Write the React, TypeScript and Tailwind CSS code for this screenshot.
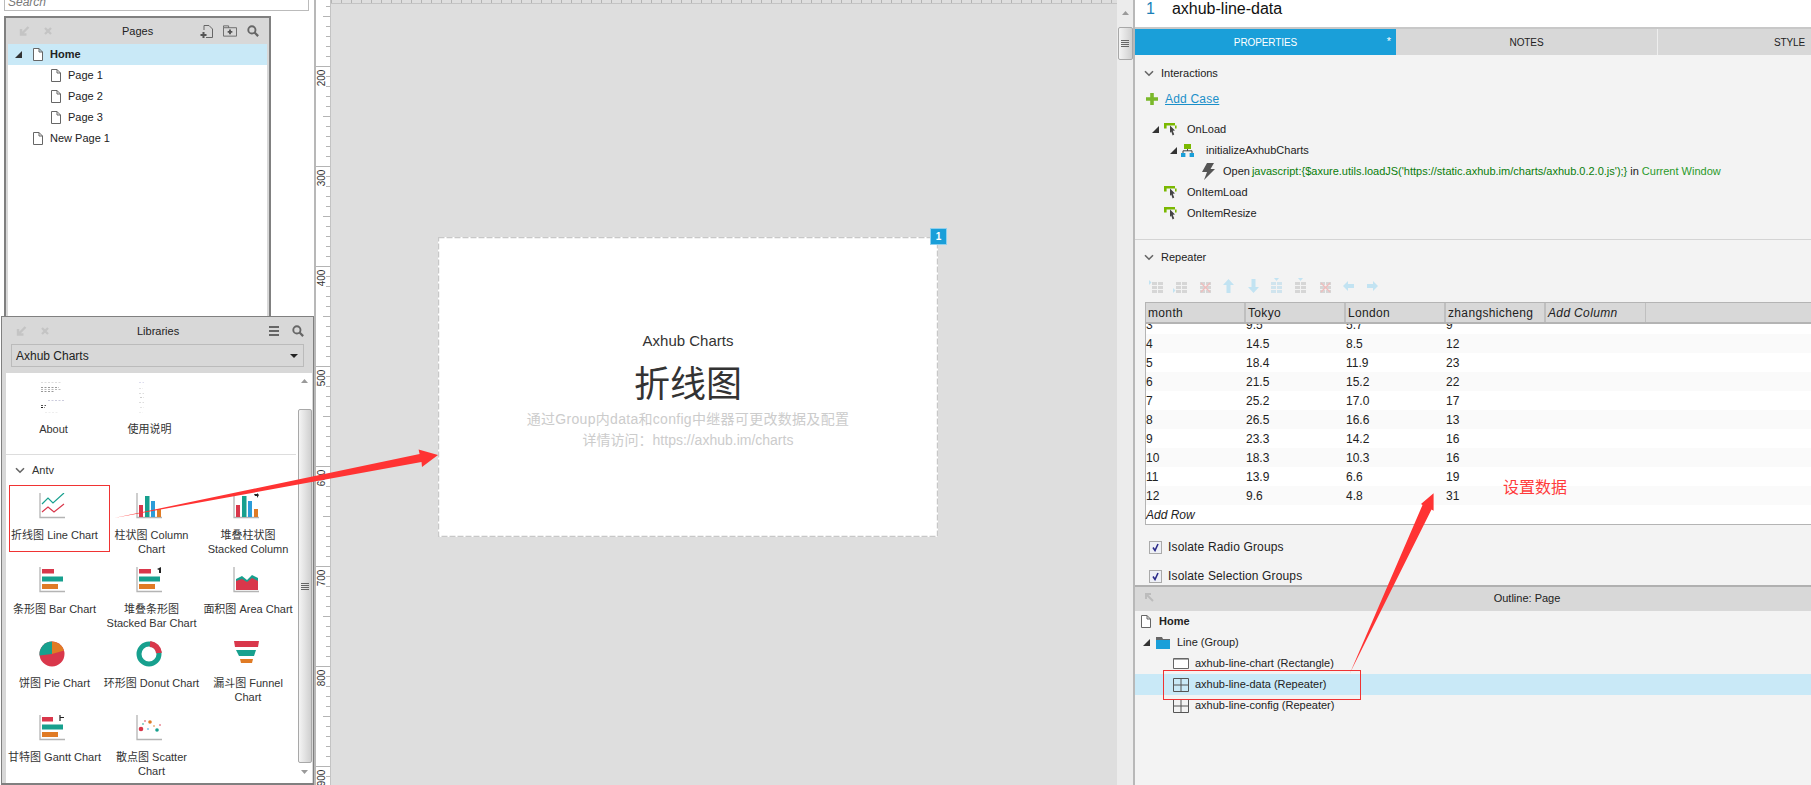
import React from "react";

const PageIcon = ({ className = "" }: { className?: string }) => (
  <svg width="10" height="13" viewBox="0 0 10 13" className={className}>
    <path d="M.5.5H6L9.5 4V12.5H.5Z M6 .5V4H9.5" fill="#fff" stroke="#666" />
  </svg>
);

const Tri = () => (
  <svg width="7" height="7" viewBox="0 0 7 7"><path d="M7 0V7H0Z" fill="#333" /></svg>
);

const Chevron = () => (
  <svg width="10" height="7" viewBox="0 0 10 7"><path d="M1 1.2L5 5.2L9 1.2" fill="none" stroke="#666" strokeWidth="1.6" /></svg>
);

const Cursor = () => (
  <svg width="13" height="13" viewBox="0 0 13 13">
    <path d="M0 0H11V2.6H2.6V5.4H0Z" fill="#7ab800" />
    <path d="M11 2.6H12.6V5.4H11Z" fill="#7ab800" />
    <path d="M6 2.6L11 7.6L8.8 7.8L10.2 11.6L8.6 12.4L7.2 8.6L6 10Z" fill="#444" />
  </svg>
);

const CaseIcon = () => (
  <svg width="13" height="13" viewBox="0 0 13 13">
    <path d="M3 0H10V5H3Z" fill="#7ab800" />
    <path d="M2 9V6.8H11V9M6.5 5V7" fill="none" stroke="#444" />
    <path d="M0 9H4.4V13H0ZM8.6 9H13V13H8.6Z" fill="#1a9fd9" />
  </svg>
);

const Bolt = () => (
  <svg width="13" height="17" viewBox="0 0 13 17"><path d="M5 0H12L8.5 6H13L2 17L5 9H0Z" fill="#555" /></svg>
);

const Axis = () => <path d="M1 0V24.5H26" fill="none" stroke="#b4b4b4" strokeWidth="1.3" />;

const red = "#d9374b";
const teal = "#17a08e";
const orange = "#e07b25";
const blue = "#2b9cd8";

const ChartIcon = ({ kind }: { kind: string }) => {
  return (
    <svg width="28" height="26" viewBox="0 0 28 26">
      {kind === "line" && (
        <>
          <Axis />
          <path d="M3 11L9 5L14 10L25 0" fill="none" stroke={teal} strokeWidth="1.2" />
          <path d="M3 19L9 14L15 19L25 11" fill="none" stroke={red} strokeWidth="1.2" />
        </>
      )}
      {kind === "column" && (
        <>
          <Axis />
          <rect x="3" y="12" width="4" height="12" fill={red} />
          <rect x="9" y="3" width="4.5" height="21" fill={teal} />
          <rect x="15" y="8" width="4" height="16" fill={blue} />
          <rect x="21" y="16" width="4" height="8" fill={orange} />
        </>
      )}
      {kind === "stackcol" && (
        <>
          <Axis />
          <rect x="3" y="12" width="4" height="12" fill={red} />
          <rect x="9" y="3" width="4.5" height="21" fill={teal} />
          <rect x="15" y="8" width="4" height="16" fill={blue} />
          <rect x="21" y="16" width="4" height="8" fill={orange} />
          <path d="M21 1H24V0L26 2L24 5V3H22Z" fill="#222" />
        </>
      )}
      {(kind === "bar" || kind === "stackbar" || kind === "gantt") && (
        <>
          <Axis />
          <rect x="3" y="2" width={kind === "gantt" ? 11 : 12} height="4.5" fill={red} />
          <rect x="3" y="9.5" width="21" height="5" fill={teal} />
          <rect x="3" y="17" width="16" height="5" fill={orange} />
          {kind === "stackbar" && <path d="M21 2L25 0V6H23V3Z" fill="#222" />}
          {kind === "gantt" && <path d="M21 0V6M21 2.5H25" stroke="#222" strokeWidth="1.2" />}
        </>
      )}
      {kind === "area" && (
        <>
          <Axis />
          <path d="M3 12L9 9L14 13L19 8L25 11V23H3Z" fill={teal} />
          <path d="M3 14L9 12L14 15L19 11L25 14V23H3Z" fill={red} />
        </>
      )}
      {kind === "pie" && (
        <>
          <circle cx="13" cy="13" r="12.5" fill={red} />
          <path d="M13 13V.5A12.5 12.5 0 0 1 25 9.5Z" fill={orange} />
          <path d="M13 13V.5A12.5 12.5 0 0 0 .6 14.5Z" fill={teal} />
        </>
      )}
      {kind === "donut" && (
        <>
          <circle cx="13" cy="13" r="10" fill="none" stroke={teal} strokeWidth="5" />
          <path d="M14 3A10 10 0 0 1 23 12" fill="none" stroke={red} strokeWidth="6" />
        </>
      )}
      {kind === "funnel" && (
        <>
          <path d="M1 0H26L25 6H2Z" fill={red} />
          <path d="M3 9H23L21 15H6Z" fill={teal} />
          <path d="M7 18H20L19 22H8Z" fill={orange} />
        </>
      )}
      {kind === "scatter" && (
        <>
          <Axis />
          <circle cx="5" cy="14" r="2.3" fill={red} />
          <circle cx="14" cy="7" r="1.8" fill={orange} />
          <circle cx="21" cy="15" r="1.8" fill={teal} />
          <circle cx="9" cy="6" r="0.8" fill={red} />
          <circle cx="7" cy="9" r="0.8" fill={teal} />
          <circle cx="18" cy="11" r="0.8" fill={orange} />
          <circle cx="24" cy="10" r="0.8" fill={red} />
          <circle cx="12" cy="14" r="0.8" fill={blue} />
        </>
      )}
    </svg>
  );
};

const Thumb = ({ wide }: { wide: boolean }) => (
  <svg width="28" height="32" viewBox="0 0 28 32">
    {(wide
      ? [[1, 1, 20, "#ddd"], [1, 6, 18, "#999"], [1, 8, 20, "#bbb"], [1, 10, 13, "#999"], [8, 19, 16, "#ccd"], [1, 24, 5, "#555"], [1, 26, 4, "#222"], [5, 31, 14, "#eee"]]
      : [[3, 1, 5, "#dde"], [3, 7, 4, "#e4e4e4"], [3, 12, 5, "#ddd"], [4, 16, 4, "#ccc"], [3, 21, 5, "#ddd"], [4, 26, 4, "#e4e4e4"], [3, 31, 4, "#eee"]]
    ).map((r, i) => (
      <line key={i} x1={r[0] as number} y1={(r[1] as number) + 0.5} x2={(r[0] as number) + (r[2] as number)} y2={(r[1] as number) + 0.5} stroke={r[3] as string} strokeDasharray="2 1.5" />
    ))}
  </svg>
);

const Search = () => (
  <svg width="12" height="12" viewBox="0 0 14 14"><circle cx="5.7" cy="5.7" r="4.2" fill="none" stroke="#666" strokeWidth="2.2" /><path d="M8.8 8.8L13 13" stroke="#666" strokeWidth="2.6" /></svg>
);

const DockIcons = () => (
  <div className="flex items-center gap-[13px]">
    <svg width="11" height="10" viewBox="0 0 11 10"><path d="M9.5 1L3 7.5M2 3V8.5H7.5" fill="none" stroke="#c4c4c4" strokeWidth="2.4" /></svg>
    <svg width="10" height="10" viewBox="0 0 10 10"><path d="M2 2L8 8M8 2L2 8" stroke="#c4c4c4" strokeWidth="2.4" /></svg>
  </div>
);

const ScrollThumb = ({ className = "" }: { className?: string }) => (
  <div className={`flex items-center justify-center rounded-[2px] border border-[#a8a8a8] bg-gradient-to-r from-[#f4f4f4] via-[#e2e2e2] to-[#cfcfcf] ${className}`}>
    <div className="flex w-[8px] flex-col gap-[1px]">
      <div className="h-[1px] bg-[#666]" />
      <div className="h-[1px] bg-[#666]" />
      <div className="h-[1px] bg-[#666]" />
      <div className="h-[1px] bg-[#666]" />
    </div>
  </div>
);

const UpArrow = () => <svg width="7" height="4" viewBox="0 0 7 4"><path d="M3.5 0L7 4H0Z" fill="#9a9a9a" /></svg>;
const DownArrow = () => <svg width="7" height="4" viewBox="0 0 7 4"><path d="M3.5 4L7 0H0Z" fill="#9a9a9a" /></svg>;

const PagesPanel = () => (
  <div className="ml-[4px] mt-[5px] flex h-[300px] w-[267px] shrink-0 flex-col border-2 border-b-0 border-[#808080] bg-[#d8d8d8] px-[2px]">
    <div className="relative flex h-[26px] shrink-0 items-center pl-[11px]">
      <DockIcons />
      <span className="absolute left-[114px] text-[11px] text-[#222]">Pages</span>
      <div className="ml-auto mr-[8px] flex items-center gap-[10px]">
        <svg width="13" height="13" viewBox="0 0 13 13"><path d="M4 5V.5H9L12.5 4V12.5H6" fill="none" stroke="#666" /><path d="M3.5 7V13M.5 10H6.5" stroke="#555" strokeWidth="2" /></svg>
        <svg width="14" height="12" viewBox="0 0 15 12"><path d="M.5 2.5H14.5V11.5H.5ZM.5 2.5V.5H6V2.5" fill="none" stroke="#666" /><path d="M7.5 4.5V9.5M5 7H10" stroke="#555" strokeWidth="2" /></svg>
        <Search />
      </div>
    </div>
    <div className="flex-1 bg-white text-[11px] text-[#222]">
      <div className="flex h-[21px] items-center bg-[#c9e9f7] pl-[7px] font-bold">
        <Tri />
        <PageIcon className="ml-[11px]" />
        <span className="ml-[7px]">Home</span>
      </div>
      {["Page 1", "Page 2", "Page 3"].map((p) => (
        <div key={p} className="flex h-[21px] items-center pl-[43px]">
          <PageIcon />
          <span className="ml-[7px]">{p}</span>
        </div>
      ))}
      <div className="flex h-[21px] items-center pl-[25px]">
        <PageIcon />
        <span className="ml-[7px]">New Page 1</span>
      </div>
    </div>
  </div>
);

const items: { kind: string; lines: string[] }[] = [
  { kind: "line", lines: ["折线图 Line Chart"] },
  { kind: "column", lines: ["柱状图 Column", "Chart"] },
  { kind: "stackcol", lines: ["堆叠柱状图", "Stacked Column"] },
  { kind: "bar", lines: ["条形图 Bar Chart"] },
  { kind: "stackbar", lines: ["堆叠条形图", "Stacked Bar Chart"] },
  { kind: "area", lines: ["面积图 Area Chart"] },
  { kind: "pie", lines: ["饼图 Pie Chart"] },
  { kind: "donut", lines: ["环形图 Donut Chart"] },
  { kind: "funnel", lines: ["漏斗图 Funnel", "Chart"] },
  { kind: "gantt", lines: ["甘特图 Gantt Chart"] },
  { kind: "scatter", lines: ["散点图 Scatter", "Chart"] },
];

const LibrariesPanel = () => (
  <div className="ml-[1px] flex min-h-0 flex-1 flex-col border-x-[1px] border-t-[1px] border-b-[2px] border-[#808080] bg-[#d8d8d8]">
    <div className="relative flex h-[27px] shrink-0 items-center pl-[14px] pt-[1px]">
      <DockIcons />
      <span className="absolute left-[135px] text-[11px] text-[#222]">Libraries</span>
      <div className="ml-auto mr-[9px] flex items-center gap-[13px]">
        <div className="flex w-[10px] flex-col gap-[2px]">
          <div className="h-[2px] bg-[#666]" />
          <div className="h-[2px] bg-[#666]" />
          <div className="h-[2px] bg-[#666]" />
        </div>
        <Search />
      </div>
    </div>
    <div className="mx-[9px] flex h-[23px] shrink-0 items-center justify-between border border-[#bbb] px-[4px] text-[12px] text-[#222]">
      <span>Axhub Charts</span>
      <svg width="8" height="4" viewBox="0 0 8 4" className="mr-[1px]"><path d="M0 0H8L4 4Z" fill="#222" /></svg>
    </div>
    <div className="ml-[4px] mr-[1px] mt-[6px] flex min-h-0 flex-1 bg-white">
      <div className="min-w-0 flex-1 overflow-hidden text-[11px] leading-[14px] text-[#333]">
        <div className="flex h-[82px] border-b border-[#ddd] pt-[8px]">
          <div className="flex w-[95px] flex-col items-center">
            <Thumb wide />
            <span className="mt-[9px]">About</span>
          </div>
          <div className="flex w-[97px] flex-col items-center">
            <Thumb wide={false} />
            <span className="mt-[9px]">使用说明</span>
          </div>
        </div>
        <div className="flex h-[30px] items-center pl-[9px]">
          <Chevron />
          <span className="ml-[7px]">Antv</span>
        </div>
        <div className="grid grid-cols-[97px_97px_96px] auto-rows-[74px] pt-[8px]">
          {items.map((it) => (
            <div key={it.kind} className="flex flex-col items-center whitespace-nowrap text-center">
              <div className="-ml-[3px] h-[26px]"><ChartIcon kind={it.kind} /></div>
              <div className="mt-[9px]">
                {it.lines.map((l) => (
                  <div key={l}>{l}</div>
                ))}
              </div>
            </div>
          ))}
        </div>
      </div>
      <div className="flex w-[16px] shrink-0 flex-col items-center bg-white pt-[6px]">
        <UpArrow />
        <ScrollThumb className="mt-[26px] ml-[2px] h-[354px] w-[14px]" />
        <div className="mt-[7px]"><DownArrow /></div>
      </div>
    </div>
  </div>
);

const VRuler = () => {
  const ticks: React.ReactNode[] = [];
  for (let y = 6; y < 785; y += 10) {
    const m = (y - 66 + 1000) % 100;
    const x = m === 0 ? 0 : m === 50 ? 7 : 10;
    ticks.push(<rect key={y} x={x} y={y} width={14 - x} height="1" fill="#b4b4b4" />);
  }
  return (
    <svg width="14" height="785" viewBox="0 0 14 785" className="block">
      {ticks}
      {[200, 300, 400, 500, 600, 700, 800, 900].map((n, i) => {
        const y = 78 + i * 100;
        return (
          <text key={n} x="5" y={y} transform={`rotate(-90 5 ${y})`} textAnchor="middle" dominantBaseline="central" fontSize="10" fill="#333">
            {n}
          </text>
        );
      })}
    </svg>
  );
};

const HRuler = () => (
  <svg width="787" height="4" viewBox="0 0 787 4" className="block shrink-0">
    <rect x="0" y="3" width="787" height="1" fill="#c4c4c4" />
    {Array.from({ length: 79 }).map((_, i) => (
      <rect key={i} x={i * 10} y="0" width="1" height="3" fill="#b4b4b4" />
    ))}
  </svg>
);

const Canvas = () => (
  <div className="flex w-[787px] shrink-0 flex-col border-l border-[#c4c4c4] bg-[#dedede]">
    <HRuler />
    <div className="relative ml-[107px] mt-[233px] flex h-[300px] w-[500px] flex-col items-center bg-white pt-[92px] text-center">
      <svg width="500" height="300" viewBox="0 0 500 300" className="absolute left-0 top-0">
        <rect x="0.5" y="0.5" width="499" height="299" fill="none" stroke="#c8c8c8" strokeWidth="1.4" strokeDasharray="6 2" />
      </svg>
      <div className="absolute -right-[9px] -top-[9px] flex h-[17px] w-[17px] items-center justify-center border border-[#8fd0ee] bg-[#1a9fd9] text-[10px] font-bold text-white">1</div>
      <div className="text-[15px] leading-[24px] text-[#333]">Axhub Charts</div>
      <div className="mt-[5px] text-[36px] leading-[54px] text-[#333]">折线图</div>
      <div className="-mt-[3px] text-[14px] leading-[21px] tracking-[0.3px] text-[#cccccc]">通过Group内data和config中继器可更改数据及配置</div>
      <div className="text-[14px] leading-[21px] text-[#cccccc]">详情访问：https://axhub.im/charts</div>
    </div>
  </div>
);

const CanvasScroll = () => (
  <div className="flex w-[18px] shrink-0 flex-col items-center border-r-2 border-[#b8b8b8] bg-[#ececec] pt-[11px]">
    <UpArrow />
    <ScrollThumb className="mt-[12px] h-[33px] w-[15px]" />
  </div>
);

const SectionTitle = ({ label, className = "" }: { label: string; className?: string }) => (
  <div className={`flex h-[21px] items-center pl-[9px] text-[11px] text-[#222] ${className}`}>
    <Chevron />
    <span className="ml-[7px]">{label}</span>
  </div>
);

const GridIcon = ({ accent }: { accent?: string }) => (
  <svg width="15" height="15" viewBox="0 0 15 15">
    {[3, 9].map((x) =>
      [3, 7, 11].map((y) => <rect key={`${x}-${y}`} x={x} y={y} width="5" height="3" fill="#d6d6d6" />)
    )}
    {accent === "top" && <path d="M0 1L2.5 3.5L0 6Z" fill="#c2e3f2" />}
    {accent === "bottom" && <path d="M0 14L2.5 11.5L0 9Z" fill="#c2e3f2" />}
    {accent === "x" && <path d="M4 4L13 13M13 4L4 13" stroke="#f0bcbc" strokeWidth="1.3" />}
  </svg>
);

const ColIcon = ({ top, accent }: { top?: boolean; accent?: string }) => (
  <svg width="13" height="16" viewBox="0 0 13 16">
    {[1, 7].map((x) => [4, 8, 12].map((y) => <rect key={`${x}-${y}`} x={x} y={y} width="5" height="3" fill={accent ?? "#d0e4ee"} />))}
    {top && <path d="M6.5 3L4 0H9Z" fill="#c2e3f2" />}
  </svg>
);

const ArrowUpDown = ({ down }: { down?: boolean }) => (
  <svg width="11" height="14" viewBox="0 0 11 14" className={down ? "rotate-180" : ""}>
    <path d="M5.5 0L11 6H7.5V14H3.5V6H0Z" fill="#c2e3f2" />
  </svg>
);

const ArrowLR = ({ right }: { right?: boolean }) => (
  <svg width="11" height="10" viewBox="0 0 11 10" className={right ? "rotate-180" : ""}>
    <path d="M0 5L5 0V3H11V7H5V10Z" fill="#c2e3f2" />
  </svg>
);

const Toolbar = () => (
  <div className="mt-[9px] flex h-[18px] items-center pl-[14px]">
    <GridIcon accent="top" />
    <div className="ml-[9px]"><GridIcon accent="bottom" /></div>
    <div className="ml-[9px]"><GridIcon accent="x" /></div>
    <div className="ml-[11px]"><ArrowUpDown /></div>
    <div className="ml-[14px]"><ArrowUpDown down /></div>
    <div className="ml-[11px]"><ColIcon top /></div>
    <div className="ml-[11px]"><ColIcon top accent="#d6d6d6" /></div>
    <div className="ml-[10px]"><GridIcon accent="x" /></div>
    <div className="ml-[11px]"><ArrowLR /></div>
    <div className="ml-[13px]"><ArrowLR right /></div>
  </div>
);

const rows = [
  ["4", "14.5", "8.5", "12"],
  ["5", "18.4", "11.9", "23"],
  ["6", "21.5", "15.2", "22"],
  ["7", "25.2", "17.0", "17"],
  ["8", "26.5", "16.6", "13"],
  ["9", "23.3", "14.2", "16"],
  ["10", "18.3", "10.3", "16"],
  ["11", "13.9", "6.6", "19"],
  ["12", "9.6", "4.8", "31"],
];

const Cells = ({ r }: { r: string[] }) => (
  <div className="flex h-[19px] shrink-0 items-center">
    {r.map((c, i) => (
      <div key={i} className="w-[100px] shrink-0">{c}</div>
    ))}
  </div>
);

const Table = () => (
  <div className="ml-[10px] mt-[7px] flex h-[223px] flex-col border-y border-l border-[#b4b4b4] text-[12px] text-[#222]">
    <div className="flex h-[21px] shrink-0 border-b-[2px] border-[#b4b4b4] bg-[#d8d8d8] tracking-[0.35px]">
      {["month", "Tokyo", "London", "zhangshicheng"].map((h) => (
        <div key={h} className="flex w-[100px] shrink-0 items-center border-r-[2px] border-[#bfbfbf] pl-[2px]">{h}</div>
      ))}
      <div className="flex w-[100px] shrink-0 items-center border-r border-[#bfbfbf] pl-[2px] italic">Add Column</div>
    </div>
    <div className="flex flex-1 flex-col bg-white">
      <div className="flex h-[10px] shrink-0 items-end overflow-hidden">
        <Cells r={["3", "9.5", "5.7", "9"]} />
      </div>
      {rows.map((r, i) => (
        <div key={r[0]} className={i % 2 === 0 ? "bg-[#fafafa]" : "bg-white"}>
          <Cells r={r} />
        </div>
      ))}
      <div className="flex h-[19px] items-center italic">Add Row</div>
    </div>
  </div>
);

const Check = ({ label, className = "" }: { label: string; className?: string }) => (
  <div className={`flex h-[20px] items-center pl-[14px] text-[12px] text-[#222] ${className}`}>
    <div className="flex h-[13px] w-[13px] items-center justify-center border border-[#aaa] bg-[#eef0f6]">
      <svg width="9" height="9" viewBox="0 0 9 9"><path d="M2 4.5L4 7.5L7 1" fill="none" stroke="#2a2a8a" strokeWidth="1.6" /></svg>
    </div>
    <span className="ml-[6px] tracking-[0.15px]">{label}</span>
  </div>
);

const RepeaterIcon = () => (
  <svg width="16" height="14" viewBox="0 0 16 14"><path d="M.5.5H15.5V13.5H.5ZM8 .5V13.5M.5 7H15.5" fill="none" stroke="#555" /></svg>
);

const RightPanel = () => (
  <div className="flex min-w-0 flex-1 flex-col overflow-hidden bg-[#f3f3f3]">
    <div className="flex h-[29px] shrink-0 border-b-2 border-[#c8c8c8] bg-white pl-[11px] text-[16px] leading-[17px]">
      <span className="text-[#1a7fb8]">1</span>
      <span className="ml-[17px] text-[#111]">axhub-line-data</span>
    </div>
    <div className="flex h-[26px] w-[786px] shrink-0 text-[10px] tracking-[-0.1px]">
      <div className="relative flex w-[261px] items-center justify-center bg-[#1a9fd9] text-white">
        PROPERTIES
        <span className="absolute right-[5px] top-[4px] text-[11px]">*</span>
      </div>
      <div className="flex w-[262px] items-center justify-center border-r border-[#eee] bg-[#d8d8d8] text-[#222]">NOTES</div>
      <div className="flex w-[263px] items-center justify-center bg-[#d8d8d8] text-[#222]">STYLE</div>
    </div>
    <div className="h-[530px] shrink-0 overflow-hidden">
      <SectionTitle label="Interactions" className="mt-[8px]" />
      <div className="mt-[4px] flex h-[22px] items-center pl-[11px] text-[12px]">
        <svg width="12" height="12" viewBox="0 0 12 12"><path d="M4.2 0H7.8V4.2H12V7.8H7.8V12H4.2V7.8H0V4.2H4.2Z" fill="#7ab82a" /></svg>
        <span className="ml-[7px] tracking-[0.2px] text-[#1a8fc9] underline">Add Case</span>
      </div>
      <div className="mt-[9px] text-[11px] text-[#222]">
        <div className="flex h-[21px] items-center pl-[17px]">
          <Tri />
          <div className="ml-[5px] flex"><Cursor /></div>
          <span className="ml-[10px]">OnLoad</span>
        </div>
        <div className="flex h-[21px] items-center pl-[35px]">
          <Tri />
          <div className="ml-[4px] flex"><CaseIcon /></div>
          <span className="ml-[12px]">initializeAxhubCharts</span>
        </div>
        <div className="flex h-[21px] items-center whitespace-nowrap pl-[67px]">
          <Bolt />
          <span className="ml-[8px]">Open </span>
          <span className="ml-[2px] text-[#0a7d0a]">javascript:{"{"}$axure.utils.loadJS('https://static.axhub.im/charts/axhub.0.2.0.js');{"}"}</span>
          <span className="ml-[3px]">in</span>
          <span className="ml-[3px] text-[#2a9a2a]">Current Window</span>
        </div>
        <div className="flex h-[21px] items-center pl-[29px]">
          <Cursor />
          <span className="ml-[10px]">OnItemLoad</span>
        </div>
        <div className="flex h-[21px] items-center pl-[29px]">
          <Cursor />
          <span className="ml-[10px]">OnItemResize</span>
        </div>
      </div>
      <div className="mt-[15px] h-[1px] bg-[#d4d4d4]" />
      <SectionTitle label="Repeater" className="mt-[7px]" />
      <Toolbar />
      <Table />
      <Check label="Isolate Radio Groups" className="mt-[12px]" />
      <Check label="Isolate Selection Groups" className="mt-[9px]" />
    </div>
    <div className="flex h-[26px] shrink-0 items-center overflow-hidden border-t-2 border-[#b0b0b0] bg-[#d8d8d8] pb-[2px] text-[11px] text-[#222]">
      <div className="relative flex w-[784px] shrink-0 justify-center">
        <svg width="9" height="9" viewBox="0 0 9 9" className="absolute left-[10px] top-[3px]"><path d="M8 8L2 2M1 6V1H6" fill="none" stroke="#bcbcbc" strokeWidth="2" /></svg>
        Outline: Page
      </div>
    </div>
    <div className="flex-1 text-[11px] text-[#222]">
      <div className="flex h-[21px] items-center pl-[6px] font-bold">
        <PageIcon />
        <span className="ml-[8px]">Home</span>
      </div>
      <div className="flex h-[21px] items-center pl-[8px]">
        <Tri />
        <svg width="14" height="12" viewBox="0 0 14 12" className="ml-[6px]"><path d="M0 0H6L7 2H14V4H0Z" fill="#666" /><path d="M0 3H14V12H0Z" fill="#1a9fd9" /></svg>
        <span className="ml-[7px]">Line (Group)</span>
      </div>
      <div className="flex h-[21px] items-center pl-[38px]">
        <svg width="16" height="11" viewBox="0 0 16 11"><path d="M.5.5H15.5V10.5H.5Z" fill="#fff" stroke="#666" /><path d="M1 1.5H15" stroke="#aaa" /></svg>
        <span className="ml-[6px]">axhub-line-chart (Rectangle)</span>
      </div>
      <div className="flex h-[21px] items-center bg-[#c9e9f7] pl-[38px]">
        <RepeaterIcon />
        <span className="ml-[6px]">axhub-line-data (Repeater)</span>
      </div>
      <div className="flex h-[21px] items-center pl-[38px]">
        <RepeaterIcon />
        <span className="ml-[6px]">axhub-line-config (Repeater)</span>
      </div>
    </div>
  </div>
);

const Annotations = () => (
  <>
    <svg width="1811" height="785" viewBox="0 0 1811 785" className="pointer-events-none absolute left-0 top-0">
      <path d="M114 518L421.5 462L422 467L438 455L418.6 449.6L419.6 454Z" fill="#ff3333" />
      <path d="M1350 673L1431.5 509.5L1433.6 510.7V493.3L1421 504L1422.5 505Z" fill="#ff3333" />
    </svg>
    <div className="pointer-events-none absolute left-[9px] top-[485px] h-[67px] w-[101px] border border-[#f03333]" />
    <div className="pointer-events-none absolute left-[1163px] top-[670px] h-[30px] w-[198px] border border-[#f03333]" />
    <div className="absolute left-[1503px] top-[478px] text-[16px] leading-[20px] text-[#ff3b3b]">设置数据</div>
  </>
);

export default function App() {
  return (
    <div className="relative flex h-[785px] w-[1811px] overflow-hidden bg-white font-['Liberation_Sans','Noto_Sans_CJK_SC',sans-serif]">
      <div className="flex w-[314px] shrink-0 flex-col">
        <div className="ml-[4px] h-[11px] w-[305px] shrink-0 overflow-hidden border-b border-x border-[#bbb]">
          <div className="-mt-[6px] pl-[3px] text-[12px] italic leading-[16px] text-[#777]">Search</div>
        </div>
        <PagesPanel />
        <LibrariesPanel />
      </div>
      <div className="w-[16px] shrink-0 border-l-2 border-[#b8b8b8]">
        <VRuler />
      </div>
      <Canvas />
      <CanvasScroll />
      <RightPanel />
      <Annotations />
    </div>
  );
}
